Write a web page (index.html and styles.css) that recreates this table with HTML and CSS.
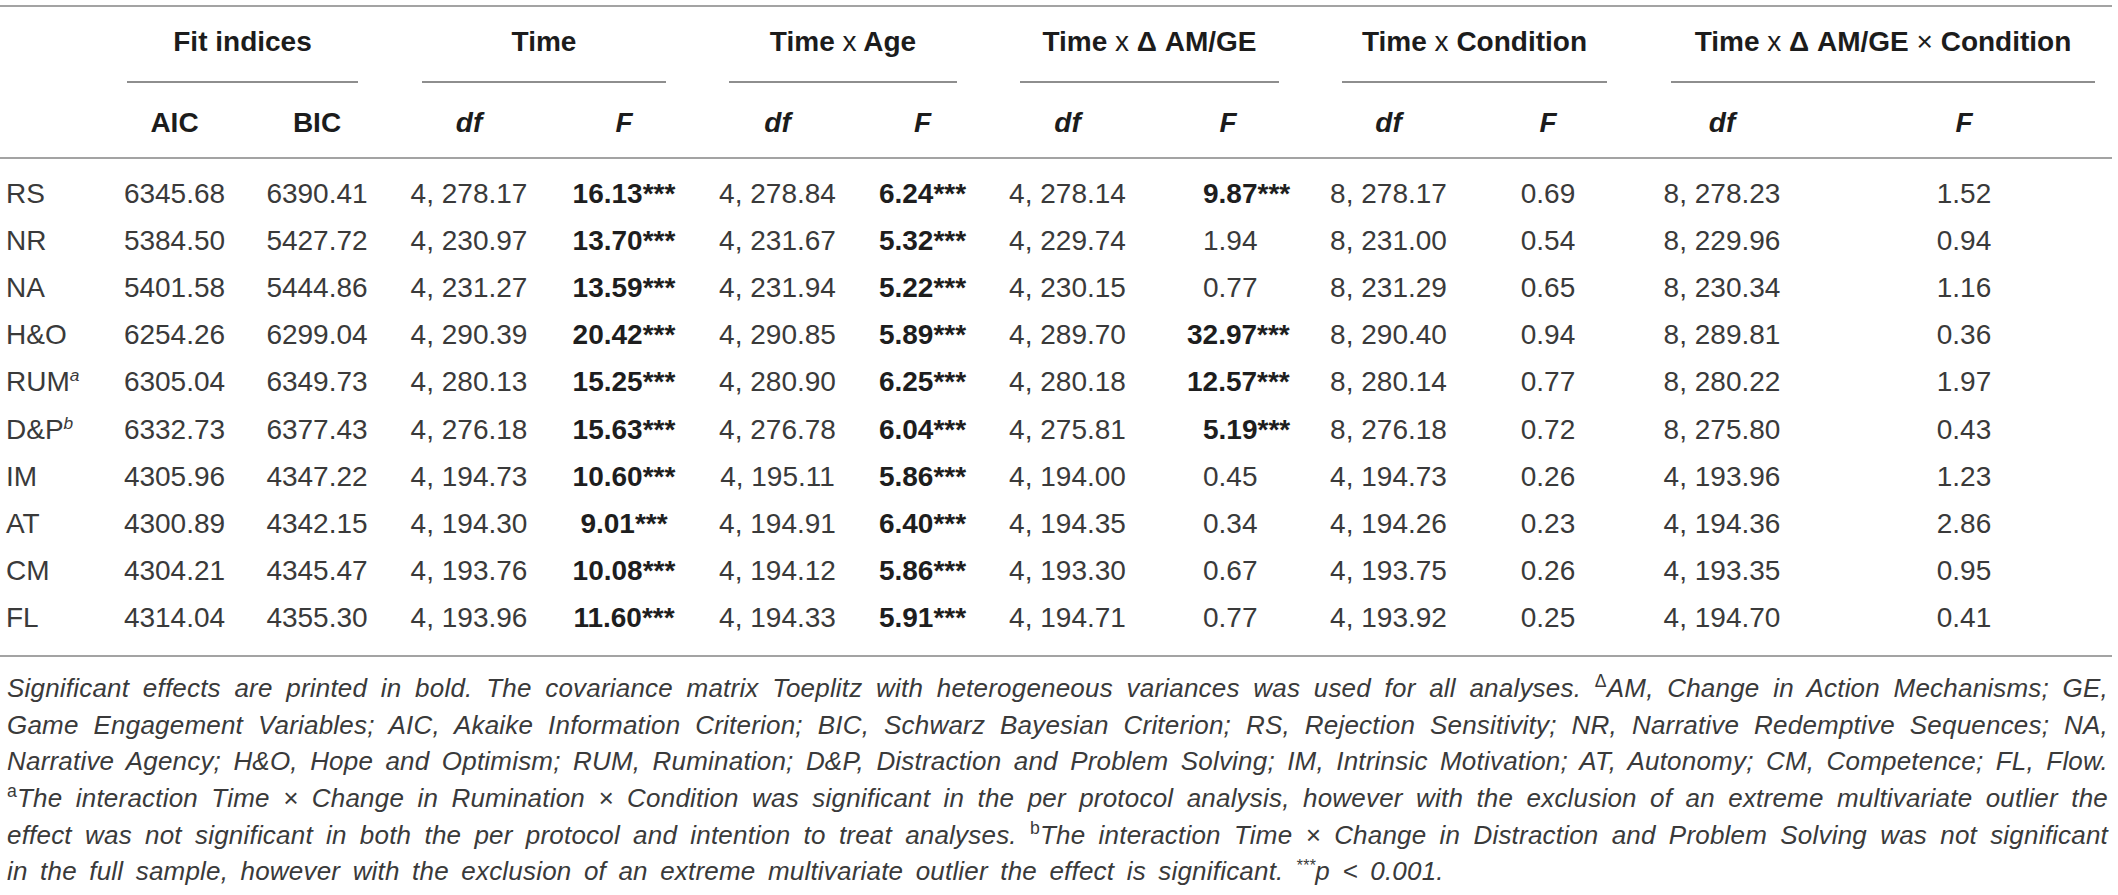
FILE: index.html
```html
<!DOCTYPE html>
<html lang="en">
<head>
<meta charset="utf-8">
<title>Table</title>
<link rel="stylesheet" href="styles.css">
</head>
<body>
<div class="page">
  <div class="tbl">
    <div class="grid thead">
      <div class="hc"></div>
      <div class="grp"><div class="gt g1">Fit indices</div></div>
      <div class="grp"><div class="gt g2">Time</div></div>
      <div class="grp"><div class="gt g3">Time <span class="x">x</span> Age</div></div>
      <div class="grp"><div class="gt g4">Time <span class="x">x</span> Δ AM/GE</div></div>
      <div class="grp"><div class="gt g5">Time <span class="x">x</span> Condition</div></div>
      <div class="grp"><div class="gt g6">Time <span class="x">x</span> Δ AM/GE <span class="x">×</span> Condition</div></div>

      <div class="sh"></div>
      <div class="sh">AIC</div>
      <div class="sh">BIC</div>
      <div class="sh i">df</div>
      <div class="sh i">F</div>
      <div class="sh i">df</div>
      <div class="sh i">F</div>
      <div class="sh i">df</div>
      <div class="sh i">F</div>
      <div class="sh i">df</div>
      <div class="sh i">F</div>
      <div class="sh i">df</div>
      <div class="sh i">F</div>
    </div>

    <div class="grid tbody">
      <div class="lab">RS</div><div class="c">6345.68</div><div class="c">6390.41</div><div class="c">4, 278.17</div><div class="c b">16.13***</div><div class="c">4, 278.84</div><div class="c b">6.24***</div><div class="c">4, 278.14</div><div class="dl b">9.87***</div><div class="c">8, 278.17</div><div class="c">0.69</div><div class="c">8, 278.23</div><div class="c">1.52</div>

      <div class="lab">NR</div><div class="c">5384.50</div><div class="c">5427.72</div><div class="c">4, 230.97</div><div class="c b">13.70***</div><div class="c">4, 231.67</div><div class="c b">5.32***</div><div class="c">4, 229.74</div><div class="dl">1.94</div><div class="c">8, 231.00</div><div class="c">0.54</div><div class="c">8, 229.96</div><div class="c">0.94</div>

      <div class="lab">NA</div><div class="c">5401.58</div><div class="c">5444.86</div><div class="c">4, 231.27</div><div class="c b">13.59***</div><div class="c">4, 231.94</div><div class="c b">5.22***</div><div class="c">4, 230.15</div><div class="dl">0.77</div><div class="c">8, 231.29</div><div class="c">0.65</div><div class="c">8, 230.34</div><div class="c">1.16</div>

      <div class="lab">H&amp;O</div><div class="c">6254.26</div><div class="c">6299.04</div><div class="c">4, 290.39</div><div class="c b">20.42***</div><div class="c">4, 290.85</div><div class="c b">5.89***</div><div class="c">4, 289.70</div><div class="dl dl2 b">32.97***</div><div class="c">8, 290.40</div><div class="c">0.94</div><div class="c">8, 289.81</div><div class="c">0.36</div>

      <div class="lab">RUM<span class="sup">a</span></div><div class="c">6305.04</div><div class="c">6349.73</div><div class="c">4, 280.13</div><div class="c b">15.25***</div><div class="c">4, 280.90</div><div class="c b">6.25***</div><div class="c">4, 280.18</div><div class="dl dl2 b">12.57***</div><div class="c">8, 280.14</div><div class="c">0.77</div><div class="c">8, 280.22</div><div class="c">1.97</div>

      <div class="lab">D&amp;P<span class="sup">b</span></div><div class="c">6332.73</div><div class="c">6377.43</div><div class="c">4, 276.18</div><div class="c b">15.63***</div><div class="c">4, 276.78</div><div class="c b">6.04***</div><div class="c">4, 275.81</div><div class="dl b">5.19***</div><div class="c">8, 276.18</div><div class="c">0.72</div><div class="c">8, 275.80</div><div class="c">0.43</div>

      <div class="lab">IM</div><div class="c">4305.96</div><div class="c">4347.22</div><div class="c">4, 194.73</div><div class="c b">10.60***</div><div class="c">4, 195.11</div><div class="c b">5.86***</div><div class="c">4, 194.00</div><div class="dl">0.45</div><div class="c">4, 194.73</div><div class="c">0.26</div><div class="c">4, 193.96</div><div class="c">1.23</div>

      <div class="lab">AT</div><div class="c">4300.89</div><div class="c">4342.15</div><div class="c">4, 194.30</div><div class="c b">9.01***</div><div class="c">4, 194.91</div><div class="c b">6.40***</div><div class="c">4, 194.35</div><div class="dl">0.34</div><div class="c">4, 194.26</div><div class="c">0.23</div><div class="c">4, 194.36</div><div class="c">2.86</div>

      <div class="lab">CM</div><div class="c">4304.21</div><div class="c">4345.47</div><div class="c">4, 193.76</div><div class="c b">10.08***</div><div class="c">4, 194.12</div><div class="c b">5.86***</div><div class="c">4, 193.30</div><div class="dl">0.67</div><div class="c">4, 193.75</div><div class="c">0.26</div><div class="c">4, 193.35</div><div class="c">0.95</div>

      <div class="lab">FL</div><div class="c">4314.04</div><div class="c">4355.30</div><div class="c">4, 193.96</div><div class="c b">11.60***</div><div class="c">4, 194.33</div><div class="c b">5.91***</div><div class="c">4, 194.71</div><div class="dl">0.77</div><div class="c">4, 193.92</div><div class="c">0.25</div><div class="c">4, 194.70</div><div class="c">0.41</div>
    </div>
  </div>

  <div class="notes">
    <div class="ln">Significant effects are printed in bold. The covariance matrix Toeplitz with heterogeneous variances was used for all analyses. <span class="up">Δ</span>AM, Change in Action Mechanisms; GE,</div>
    <div class="ln">Game Engagement Variables; AIC, Akaike Information Criterion; BIC, Schwarz Bayesian Criterion; RS, Rejection Sensitivity; NR, Narrative Redemptive Sequences; NA,</div>
    <div class="ln">Narrative Agency; H&amp;O, Hope and Optimism; RUM, Rumination; D&amp;P, Distraction and Problem Solving; IM, Intrinsic Motivation; AT, Autonomy; CM, Competence; FL, Flow.</div>
    <div class="ln"><span class="up">a</span>The interaction Time × Change in Rumination × Condition was significant in the per protocol analysis, however with the exclusion of an extreme multivariate outlier the</div>
    <div class="ln">effect was not significant in both the per protocol and intention to treat analyses. <span class="up">b</span>The interaction Time × Change in Distraction and Problem Solving was not significant</div>
    <div class="ln end">in the full sample, however with the exclusion of an extreme multivariate outlier the effect is significant. <span class="ast">***</span>p &lt; 0.001.</div>
  </div>
</div>
</body>
</html>
```

FILE: styles.css
```css
html, body {
  margin: 0;
  padding: 0;
  background: #ffffff;
}

body {
  font-family: "Liberation Sans", Arial, Helvetica, sans-serif;
  color: #3a3a3a;
}

.page {
  width: 2118px;
}

.tbl {
  margin-top: 5px;
  width: 2112px;
  border-top: 2px solid #a3a3a3;
  border-bottom: 2px solid #a3a3a3;
}

.grid {
  display: grid;
  grid-template-columns: 103px 143px 142px 162px 148px 159px 131px 159px 162px 159px 160px 188px 296px;
}

.thead {
  border-bottom: 2px solid #a3a3a3;
  font-size: 28px;
  line-height: 30px;
  font-weight: bold;
  color: #1c1c1c;
}

.grp {
  grid-column: span 2;
}

.gt {
  padding: 20px 0 24px;
  border-bottom: 2px solid #8e8e8e;
  text-align: center;
  white-space: nowrap;
}

.gt .x {
  font-weight: normal;
}

.g1 { margin: 0 30px 0 24px; }
.g2 { margin: 0 32px 0 34px; }
.g3 { margin: 0 31px 0 31px; }
.g4 { margin: 0 30px 0 32px; }
.g5 { margin: 0 21px 0 33px; }
.g6 { margin: 0 17px 0 43px; }

.sh {
  padding: 25px 0 19px;
  text-align: center;
}

.sh.i {
  font-style: italic;
}

.tbody {
  padding: 11px 0 13px;
  grid-auto-rows: 47.2px;
  align-items: center;
  font-size: 28px;
  line-height: 30px;
  color: #3a3a3a;
  white-space: nowrap;
}

.lab {
  padding-left: 6px;
}

.sup {
  font-size: 0.62em;
  font-style: italic;
  vertical-align: 0.6em;
  line-height: 0;
}

.c {
  text-align: center;
}

.b {
  font-weight: bold;
  color: #1e1e1e;
}

.dl {
  text-align: left;
  padding-left: 56px;
}

.dl.dl2 {
  padding-left: 40px;
}

.notes {
  margin-top: 13px;
  padding: 0 10px 0 7px;
  font-size: 26px;
  letter-spacing: 0.2px;
  line-height: 36.7px;
  font-style: italic;
  color: #3a3a3a;
}

.ln {
  text-align: justify;
  text-align-last: justify;
}

.ln.end {
  text-align-last: left;
  word-spacing: 5px;
}

.up {
  font-style: normal;
  font-size: 0.68em;
  vertical-align: 0.55em;
  line-height: 0;
}

.ast {
  font-size: 0.62em;
  vertical-align: 0.55em;
  line-height: 0;
}
```
